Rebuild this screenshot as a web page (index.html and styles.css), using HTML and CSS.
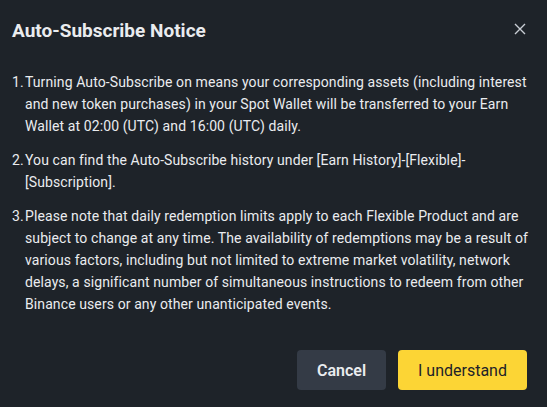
FILE: index.html
```html
<!DOCTYPE html>
<html lang="en">
<head>
<meta charset="utf-8">
<title>Auto-Subscribe Notice</title>
<link rel="stylesheet" href="styles.css">
</head>
<body>
<div class="dialog">
  <div class="header">
    <h2 class="title">Auto-Subscribe Notice</h2>
    <button class="close" aria-label="Close">
      <svg width="12" height="12" viewBox="0 0 12 12"><path d="M1 1L11 11M11 1L1 11" stroke="#C8CDD4" stroke-width="1.4" fill="none"/></svg>
    </button>
  </div>
  <ol class="items">
    <li class="item"><span class="num">1.</span><span class="txt">Turning Auto-Subscribe on means your corresponding assets (including interest<br>and new token purchases) in your Spot Wallet will be transferred to your Earn<br>Wallet at 02:00 (UTC) and 16:00 (UTC) daily.</span></li>
    <li class="item"><span class="num">2.</span><span class="txt">You can find the Auto-Subscribe history under [Earn History]-[Flexible]-<br>[Subscription].</span></li>
    <li class="item"><span class="num">3.</span><span class="txt">Please note that daily redemption limits apply to each Flexible Product and are<br>subject to change at any time. The availability of redemptions may be a result of<br>various factors, including but not limited to extreme market volatility, network<br>delays, a significant number of simultaneous instructions to redeem from other<br>Binance users or any other unanticipated events.</span></li>
  </ol>
  <div class="actions">
    <button class="btn btn-cancel">Cancel</button>
    <button class="btn btn-primary">I understand</button>
  </div>
</div>
</body>
</html>
```
FILE: styles.css
```css
html, body {
  margin: 0;
  padding: 0;
  background: #1E2329;
}
body {
  font-family: Roboto, "Liberation Sans", sans-serif;
  color: #EAECEF;
  width: 547px;
  height: 407px;
  overflow: hidden;
}
.dialog {
  padding: 17px 20px 19px 12px;
}
.header {
  display: flex;
  align-items: center;
  justify-content: space-between;
  height: 28px;
}
.title {
  margin: 0;
  font-size: 19px;
  font-weight: 700;
  line-height: 28px;
  color: #EAECEF;
}
.close {
  background: none;
  border: 0;
  padding: 0;
  margin-right: -1px;
  margin-top: -5px;
  width: 16px;
  height: 16px;
  display: flex;
  align-items: center;
  justify-content: center;
}
.items {
  list-style: none;
  margin: 26px 0 0;
  padding: 0;
  font-size: 14px;
  line-height: 22px;
  letter-spacing: 0.1px;
}
.item {
  display: flex;
  margin-bottom: 12px;
  white-space: nowrap;
}
.item:last-child {
  margin-bottom: 0;
}
.num {
  width: 13px;
  flex: none;
}
.actions {
  display: flex;
  justify-content: flex-end;
  gap: 12px;
  margin-top: 35px;
}
.btn {
  font-family: inherit;
  height: 40px;
  border: 0;
  border-radius: 4px;
  font-size: 16px;
  padding: 0;
}
.btn-cancel {
  width: 89px;
  background: #343B46;
  color: #EAECEF;
  font-weight: 600;
}
.btn-primary {
  width: 129px;
  background: #FCD535;
  color: #1E2329;
  font-weight: 400;
}
```
